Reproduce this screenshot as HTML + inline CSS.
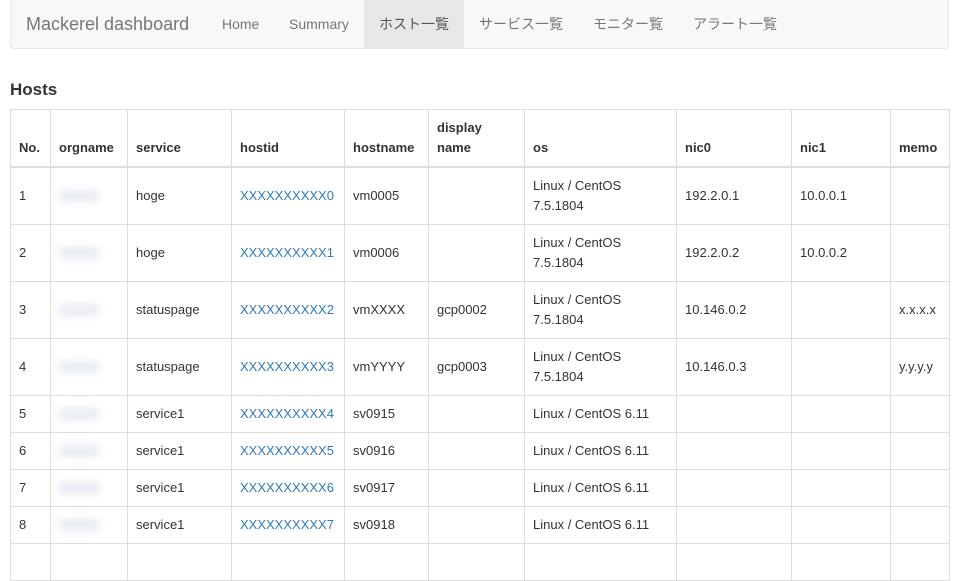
<!DOCTYPE html>
<html><head><meta charset="utf-8"><style>
body{margin:0;background:#fff;font-family:"Liberation Sans","Noto Sans CJK JP",sans-serif;font-size:13px;color:#333;line-height:20px}
.nav{position:absolute;left:10px;top:0;width:937px;height:48px;background:#f8f8f8;border:1px solid #e7e7e7;border-top:none;border-radius:0 0 4px 4px}
.nav span{position:absolute;top:0;height:48px;line-height:48px;color:#777;font-size:14px}
.brand{font-size:18px!important;left:15px}
.act{background:#e7e7e7;color:#555!important;text-align:center}
h3{position:absolute;left:10px;top:80px;margin:0;font-size:17px;font-weight:bold;color:#333}
table{position:absolute;left:10px;top:109px;border-collapse:collapse;table-layout:fixed;width:939px}
td,th{border:1px solid #ddd;padding:8px;vertical-align:middle;text-align:left;overflow:hidden;white-space:nowrap;line-height:20px}
th{vertical-align:bottom;border-bottom:2px solid #ddd;white-space:normal;font-weight:bold}
td.os{white-space:normal}
a{color:#337ab7;text-decoration:none}
td.b{position:relative}
.blur{position:absolute;left:8px;top:50%;margin-top:-6px;width:40px;height:12px;background:#e8ecf2;filter:blur(4px)}
</style></head><body>
<div class="nav">
<span class="brand">Mackerel dashboard</span>
<span style="left:211px">Home</span>
<span style="left:278px">Summary</span>
<span class="act" style="left:353px;width:100px">ホスト一覧</span>
<span style="left:468px">サービス一覧</span>
<span style="left:582px">モニター覧</span>
<span style="left:682px">アラート一覧</span>
</div>
<h3>Hosts</h3>
<table>
<colgroup><col style="width:40px"><col style="width:77px"><col style="width:104px"><col style="width:113px"><col style="width:84px"><col style="width:96px"><col style="width:152px"><col style="width:115px"><col style="width:99px"><col style="width:59px"></colgroup>
<tr><th>No.</th><th>orgname</th><th>service</th><th>hostid</th><th>hostname</th><th>display name</th><th>os</th><th>nic0</th><th>nic1</th><th>memo</th></tr>
<tr><td>1</td><td class="b"><span class="blur"></span></td><td>hoge</td><td><a>XXXXXXXXXX0</a></td><td>vm0005</td><td></td><td class="os">Linux / CentOS 7.5.1804</td><td>192.2.0.1</td><td>10.0.0.1</td><td></td></tr>
<tr><td>2</td><td class="b"><span class="blur"></span></td><td>hoge</td><td><a>XXXXXXXXXX1</a></td><td>vm0006</td><td></td><td class="os">Linux / CentOS 7.5.1804</td><td>192.2.0.2</td><td>10.0.0.2</td><td></td></tr>
<tr><td>3</td><td class="b"><span class="blur"></span></td><td>statuspage</td><td><a>XXXXXXXXXX2</a></td><td>vmXXXX</td><td>gcp0002</td><td class="os">Linux / CentOS 7.5.1804</td><td>10.146.0.2</td><td></td><td>x.x.x.x</td></tr>
<tr><td>4</td><td class="b"><span class="blur"></span></td><td>statuspage</td><td><a>XXXXXXXXXX3</a></td><td>vmYYYY</td><td>gcp0003</td><td class="os">Linux / CentOS 7.5.1804</td><td>10.146.0.3</td><td></td><td>y.y.y.y</td></tr>
<tr><td>5</td><td class="b"><span class="blur"></span></td><td>service1</td><td><a>XXXXXXXXXX4</a></td><td>sv0915</td><td></td><td>Linux / CentOS 6.11</td><td></td><td></td><td></td></tr>
<tr><td>6</td><td class="b"><span class="blur"></span></td><td>service1</td><td><a>XXXXXXXXXX5</a></td><td>sv0916</td><td></td><td>Linux / CentOS 6.11</td><td></td><td></td><td></td></tr>
<tr><td>7</td><td class="b"><span class="blur"></span></td><td>service1</td><td><a>XXXXXXXXXX6</a></td><td>sv0917</td><td></td><td>Linux / CentOS 6.11</td><td></td><td></td><td></td></tr>
<tr><td>8</td><td class="b"><span class="blur"></span></td><td>service1</td><td><a>XXXXXXXXXX7</a></td><td>sv0918</td><td></td><td>Linux / CentOS 6.11</td><td></td><td></td><td></td></tr>
<tr><td>&nbsp;</td><td></td><td></td><td></td><td></td><td></td><td></td><td></td><td></td><td></td></tr>
</table>
</body></html>
